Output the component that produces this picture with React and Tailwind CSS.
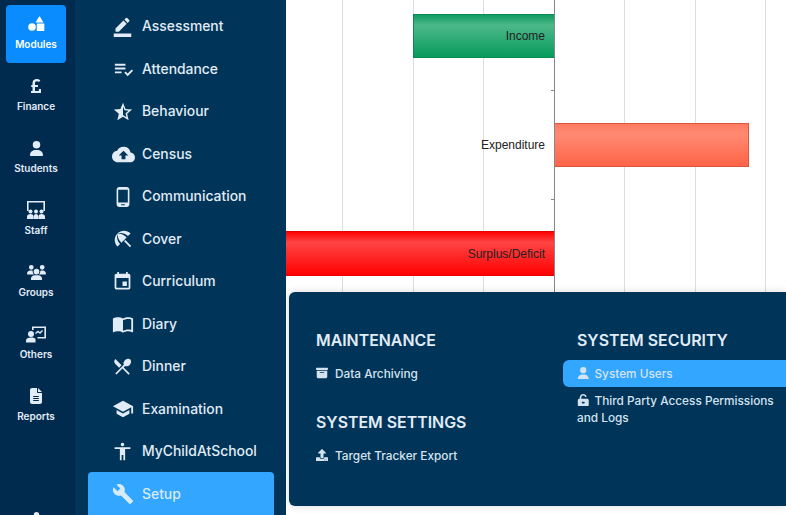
import React from "react";
import { FaUser, FaUsers, FaFileLines, FaBoxArchive, FaUnlockKeyhole } from "react-icons/fa6";
import { FaUpload, FaPoundSign } from "react-icons/fa";
import {
  MdBorderColor,
  MdPlaylistAddCheck,
  MdStarHalf,
  MdCloudUpload,
  MdPhoneAndroid,
  MdBeachAccess,
  MdEvent,
  MdImportContacts,
  MdRestaurantMenu,
  MdSchool,
  MdAccessibility,
  MdBuild,
} from "react-icons/md";

const ShapesIcon = ({ className }) => (
  <svg viewBox="0 0 17 16" className={className} fill="currentColor">
    <path d="M11.500 0l4 6.500h-8z" />
    <circle cx="4" cy="11" r="3.800" />
    <rect x="8.800" y="7.500" width="7.500" height="7.500" rx="0.500" />
  </svg>
);

const StaffIcon = ({ className }) => (
  <svg viewBox="0 0 20 20" className={className} fill="currentColor">
    <path d="M1 1h18v10h-1.600V2.600H2.600V11H1z" />
    <circle cx="4.500" cy="11.500" r="2" />
    <circle cx="10" cy="11.500" r="2" />
    <circle cx="15.500" cy="11.500" r="2" />
    <path d="M1 19v-2.500c0-1.500 1.500-2.500 3.500-2.500S7.600 15 7.600 16.500V19zM7.900 19v-2.500c0-1.500.6-2.500 2.100-2.500s2.100 1 2.100 2.500V19zM12.400 19v-2.500c0-1.500 1.100-2.500 3.100-2.500s3.500 1 3.500 2.500V19z" />
  </svg>
);

const OthersIcon = ({ className }) => (
  <svg viewBox="0 0 20 17" className={className} fill="currentColor">
    <path d="M6 0.500h14v12h-8.500v-1.600h6.900V2.100H7.600V4H6z" />
    <path d="M9.500 7.500l2.500-2 2 1.500 2.500-2.500" fill="none" stroke="currentColor" strokeWidth="1.400" />
    <circle cx="5" cy="8" r="3" />
    <path d="M0 16.500v-2c0-2 2-3 5-3 2 0 3.500.4 4.500 1.400v3.600z" />
  </svg>
);

const rail = [
  { label: "Modules", icon: ShapesIcon, size: "w-[17px] h-[16px]", active: true },
  { label: "Finance", icon: FaPoundSign, size: "text-[16px]" },
  { label: "Students", icon: FaUser, size: "text-[15px]" },
  { label: "Staff", icon: StaffIcon, size: "w-[20px] h-[20px]" },
  { label: "Groups", icon: FaUsers, size: "text-[19px]" },
  { label: "Others", icon: OthersIcon, size: "w-[20px] h-[17px]" },
  { label: "Reports", icon: FaFileLines, size: "text-[16px]" },
];

const modules = [
  { label: "Assessment", icon: MdBorderColor, size: "text-[21px]" },
  { label: "Attendance", icon: MdPlaylistAddCheck, size: "text-[23px]" },
  { label: "Behaviour", icon: MdStarHalf, size: "text-[22px]" },
  { label: "Census", icon: MdCloudUpload, size: "text-[23px]" },
  { label: "Communication", icon: MdPhoneAndroid, size: "text-[22px]" },
  { label: "Cover", icon: MdBeachAccess, size: "text-[22px]" },
  { label: "Curriculum", icon: MdEvent, size: "text-[21px]" },
  { label: "Diary", icon: MdImportContacts, size: "text-[22px]" },
  { label: "Dinner", icon: MdRestaurantMenu, size: "text-[21px]" },
  { label: "Examination", icon: MdSchool, size: "text-[22px]" },
  { label: "MyChildAtSchool", icon: MdAccessibility, size: "text-[21px]" },
  { label: "Setup", icon: MdBuild, size: "text-[22px]", active: true },
];

const Chart = () => (
  <svg viewBox="0 0 500 292" className="h-[292px] w-[500px]" fontFamily="Liberation Sans, sans-serif" fontSize="12">
    <defs>
      <linearGradient id="green" x1="0" y1="0" x2="0" y2="1">
        <stop offset="0" stopColor="#0b9a5f" />
        <stop offset="0.25" stopColor="#4db88a" />
        <stop offset="1" stopColor="#069a5c" />
      </linearGradient>
      <linearGradient id="coral" x1="0" y1="0" x2="0" y2="1">
        <stop offset="0" stopColor="#ff7a60" />
        <stop offset="0.25" stopColor="#ff8a72" />
        <stop offset="1" stopColor="#ff6347" />
      </linearGradient>
      <linearGradient id="red" x1="0" y1="0" x2="0" y2="1">
        <stop offset="0" stopColor="#ff0000" />
        <stop offset="0.25" stopColor="#ff4444" />
        <stop offset="1" stopColor="#ff0000" />
      </linearGradient>
    </defs>
    {[56.5, 127.5, 197.5, 338.5, 409.5, 479.5].map((x) => (
      <line key={x} x1={x} x2={x} y1="0" y2="292" stroke="#dddddd" />
    ))}
    <rect x="127.500" y="14.500" width="141" height="43" fill="url(#green)" stroke="#0a8a55" />
    <rect x="268.500" y="123.500" width="194" height="43" fill="url(#coral)" stroke="#d9553d" />
    <rect x="-2" y="231.500" width="270.500" height="44" fill="url(#red)" stroke="#e60000" />
    <line x1="268.500" x2="268.500" y1="0" y2="292" stroke="#888888" />
    <line x1="265" x2="268" y1="90.500" y2="90.500" stroke="#888888" />
    <line x1="265" x2="268" y1="199.500" y2="199.500" stroke="#888888" />
    <g fill="#222222" textAnchor="end">
      <text x="259" y="40">Income</text>
      <text x="259" y="149">Expenditure</text>
      <text x="259" y="258">Surplus/Deficit</text>
    </g>
  </svg>
);

const MenuItem = ({ icon: Icon, label, active }) => (
  <div className={`-mr-4 rounded-l-md pb-[4px] pl-[14px] pr-2 pt-[6px] leading-[17px] ${active ? "bg-[#33a6ff]" : ""}`}>
    <Icon className="mr-[5px] inline-block align-[-1px] text-[12.500px]" />
    {label}
  </div>
);

const App = () => {
  return (
    <div className="flex h-[515px] w-[786px] overflow-hidden bg-white font-['Inter',sans-serif]">
      <div className="relative w-[75px] shrink-0 bg-[#012a4f] pl-[6px] pt-[5px] text-[#e1ecf6]">
        <div className="flex w-[60px] flex-col gap-[4px]">
          {rail.map((item) => (
            <div
              key={item.label}
              className={`flex h-[58px] flex-col items-center rounded-[4px] pt-[8px] ${item.active ? "bg-[#0a8cff] text-white" : ""}`}
            >
              <div className="flex h-[22px] items-center">
                <item.icon className={item.size} />
              </div>
              <span className="mt-[2px] text-[10px] font-semibold leading-[14px]">{item.label}</span>
            </div>
          ))}
        </div>
        <FaUser className="absolute left-[31px] top-[512px] text-[11px]" />
      </div>

      <div className="w-[211px] shrink-0 bg-[#003459] pl-[13px] pr-3 pt-[4.500px] text-[#e1ecf6]">
        {modules.map((item) => (
          <div
            key={item.label}
            className={`flex h-[42.500px] items-center rounded-t-[4px] pl-[24px] pt-[2px] ${item.active ? "bg-[#33a6ff] text-[#d8ebfb]" : ""}`}
          >
            <div className="flex w-[30px] shrink-0 items-center">
              <item.icon className={item.size} />
            </div>
            <span className="text-[13.900px] font-medium">{item.label}</span>
          </div>
        ))}
      </div>

      <div className="relative flex-1">
        <Chart />
        <div className="absolute left-[3px] right-0 top-[292px] grid h-[214px] grid-cols-[261px_1fr] rounded-l-md bg-[#003459] pl-[27px] pt-[38px] text-[11.800px] font-medium text-[#d5e3ef] shadow-[0_0_8px_rgba(0,0,0,0.15)]">
          <div>
            <h3 className="text-[15.900px] font-semibold leading-[22px] text-[#e1ecf6]">MAINTENANCE</h3>
            <div className="mt-[14px] leading-[17px]">
              <FaBoxArchive className="mr-[7px] inline-block align-[-1px] text-[12px]" />
              Data Archiving
            </div>
            <h3 className="mt-[29px] text-[15.900px] font-semibold leading-[22px] text-[#e1ecf6]">SYSTEM SETTINGS</h3>
            <div className="mt-[14px] leading-[17px]">
              <FaUpload className="mr-[7px] inline-block align-[-1px] text-[12px]" />
              Target Tracker Export
            </div>
          </div>
          <div className="-ml-[14px]">
            <h3 className="pl-[14px] text-[15.900px] font-semibold leading-[22px] text-[#e1ecf6]">SYSTEM SECURITY</h3>
            <div className="mt-[8px]">
              <MenuItem icon={FaUser} label="System Users" active />
              <MenuItem icon={FaUnlockKeyhole} label="Third Party Access Permissions and Logs" />
            </div>
          </div>
        </div>
      </div>
    </div>
  );
};

export default App;
